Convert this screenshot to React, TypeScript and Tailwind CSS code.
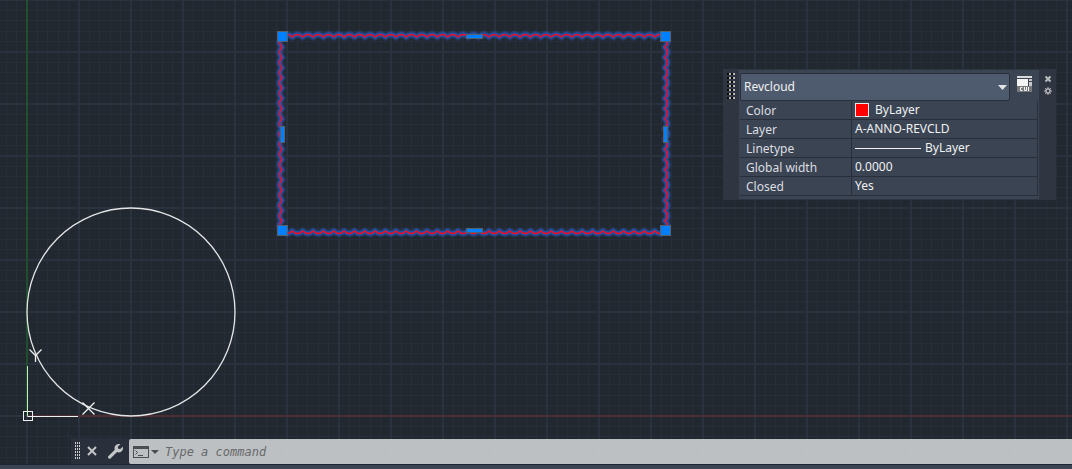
import React from 'react';

// Corners of the revision cloud and its scallop count per side
const cloud = { left: 282, top: 37, right: 665, bottom: 231, columns: 37, rows: 19 };

const cloudPath = () => {
  const { left, top, right, bottom, columns, rows } = cloud;
  const w = (right - left) / columns;
  const h = (bottom - top) / rows;
  const parts = [`M${left} ${top}`];
  for (let i = 0; i < columns; i++) parts.push(`q${w / 2} -5 ${w} 0`);
  for (let i = 0; i < rows; i++) parts.push(`q5 ${h / 2} 0 ${h}`);
  for (let i = 0; i < columns; i++) parts.push(`q${-w / 2} 5 ${-w} 0`);
  for (let i = 0; i < rows; i++) parts.push(`q-5 ${-h / 2} 0 ${-h}`);
  return parts.join(' ');
};

const grips = [
  { x: 277, y: 31, w: 10, h: 10 },
  { x: 660, y: 31, w: 10, h: 10 },
  { x: 277, y: 225, w: 10, h: 10 },
  { x: 660, y: 225, w: 10, h: 10 },
  { x: 466, y: 34, w: 16, h: 4 },
  { x: 466, y: 228, w: 16, h: 4 },
  { x: 280, y: 126, w: 4, h: 16 },
  { x: 663, y: 126, w: 4, h: 16 }
];

const properties = [
  { name: 'Color', value: 'ByLayer', kind: 'color' },
  { name: 'Layer', value: 'A-ANNO-REVCLD', kind: 'text' },
  { name: 'Linetype', value: 'ByLayer', kind: 'line' },
  { name: 'Global width', value: '0.0000', kind: 'input' },
  { name: 'Closed', value: 'Yes', kind: 'text' }
];

const Drawing = () => {
  const path = cloudPath();

  return (
    <svg className="absolute inset-0 w-full h-full" aria-label="Drawing area">
      <defs>
        <pattern id="grid" x="26" y="-1" width="52" height="52" patternUnits="userSpaceOnUse">
          <path
            d="M11.5 0V52M21.5 0V52M32.5 0V52M42.5 0V52M0 11.5H52M0 21.5H52M0 32.5H52M0 42.5H52"
            stroke="#272e39"
            fill="none"
          />
          <path d="M1 0V52M0 1H52" stroke="#2b323f" strokeWidth="2" fill="none" />
        </pattern>
      </defs>
      <rect width="100%" height="100%" fill="#212830" />
      <rect width="100%" height="100%" fill="url(#grid)" />

      {/* World axes */}
      <line x1="27" y1="0" x2="27" y2="416" stroke="#1d5a26" strokeWidth="1.5" />
      <line x1="27" y1="416" x2="100%" y2="416" stroke="#5c2a2f" strokeWidth="1.5" />

      <circle cx="131" cy="312" r="104" fill="none" stroke="#e4e5e6" strokeWidth="1.3" />

      {/* UCS icon */}
      <g fill="none" stroke="#f0f0f0">
        <path d="M27.5 366V416.5" stroke="#c4e8c4" />
        <path d="M27.5 416.5H78" />
        <rect x="23.5" y="411.5" width="9" height="9" />
        <g strokeWidth="1.3">
          <path d="M29.5 349.5L35.5 355.5L41.5 349.5M35.5 355.5V362" />
          <path d="M82.5 402.5L94.5 414.5M94.5 402.5L82.5 414.5" />
        </g>
      </g>

      <g fill="none" strokeLinejoin="round">
        <path d={path} stroke="#2458b8" strokeOpacity="0.35" strokeWidth="7" />
        <path d={path} stroke="#2458b8" strokeOpacity="0.75" strokeWidth="4.5" />
        <path d={path} stroke="#fa0a20" strokeWidth="1.4" />
      </g>
      {grips.map((grip) => (
        <rect
          key={`${grip.x}-${grip.y}`}
          x={grip.x + 0.5}
          y={grip.y + 0.5}
          width={grip.w}
          height={grip.h}
          fill="#007fff"
          stroke="#56616c"
        />
      ))}
    </svg>
  );
};

const Gripper = ({ rows, light }: { rows: number; light?: boolean }) => (
  <svg width={light ? 5 : 8} height={rows * (light ? 3 : 4)} aria-hidden="true">
    {Array.from({ length: rows }, (_, i) =>
      light ? (
        <path key={i} d={`M0 ${i * 3 + 1}h1m1 0h1m1 0h1`} stroke="#cfd0d2" strokeWidth="2" />
      ) : (
        <g key={i}>
          <path d={`M0 ${i * 4 + 1}h2m2 0h2`} stroke="#0a0a0a" strokeWidth="2" />
          <path d={`M2 ${i * 4 + 1}h2m2 0h2`} stroke="#b4b4b4" strokeWidth="2" />
        </g>
      )
    )}
  </svg>
);

const PropertyValue = ({ value, kind }: { value: string; kind: string }) => {
  if (kind === 'input') {
    return (
      <input
        id="global-width"
        defaultValue={value}
        className="block w-full h-4 bg-transparent p-0 leading-4 outline-none"
      />
    );
  }
  return (
    <div className="flex items-center h-4">
      {kind === 'color' && <span className="w-3.5 h-3.5 mr-1.5 bg-[#ff0000] border border-[#e8e8e8]" />}
      {kind === 'line' && <span className="w-[66px] h-px mr-1 bg-[#f2f2f2]" />}
      {value}
    </div>
  );
};

const QuickProperties = () => (
  <section
    aria-label="Quick properties"
    className="absolute top-[69px] right-4 w-[333px] flex bg-[#2f3541] text-[12px] text-[#f0f1f2]"
  >
    <div className="w-4 shrink-0 pt-1 pl-1">
      <Gripper rows={7} />
    </div>
    <div className="flex-1 bg-[#3b4453] mt-px mb-px pt-[3px] pb-[3px] px-px">
      <div className="flex items-start">
        <div className="relative w-[270px]">
          <select
            aria-label="Object type"
            className="block w-full h-7 appearance-none bg-[#4e5a6d] border border-[#292f3a] rounded-xs pl-[3px] outline-none"
          >
            <option>Revcloud</option>
          </select>
          <svg className="absolute right-[3px] top-3 pointer-events-none" width="9" height="5" aria-hidden="true">
            <path d="M0 0H9L4.5 5Z" fill="#e2e4e6" />
          </svg>
        </div>
        <button aria-label="Customize user interface" className="ml-[7px] mt-[3px]">
          <svg className="block" width="16" height="17" aria-hidden="true">
            <path d="M0 0H15V2H0Z" fill="#d8d8d8" />
            <path d="M0 3H11V10H0Z" fill="#f4f4f4" />
            <path d="M12 3H15V5H12ZM12 6H15V10H12Z" fill="#c8c8c8" />
            <path d="M0 10H15V16H0Z" fill="#77797c" />
            <path d="M5.5 11.5H3.5V14.5H5.5M7.5 11V14.5H9.5V11M11.5 11V15" fill="none" stroke="#f4f4f4" />
          </svg>
        </button>
      </div>
      <table className="w-full table-fixed border-separate border-spacing-0 border-r border-[#292f3a]">
        <tbody>
          {properties.map((property) => (
            <tr key={property.name}>
              <th
                scope="row"
                className="w-[112px] h-[19px] p-0 pt-px pl-1.5 text-left font-normal leading-4 text-[#dcdee1] border-b border-r border-[#292f3a]"
              >
                {property.kind === 'input' ? (
                  <label htmlFor="global-width" className="block">{property.name}</label>
                ) : (
                  property.name
                )}
              </th>
              <td className="h-[19px] p-0 pl-[3px] leading-4 border-b border-[#292f3a]">
                <PropertyValue value={property.value} kind={property.kind} />
              </td>
            </tr>
          ))}
        </tbody>
      </table>
    </div>
    <div className="w-[17px] shrink-0 flex flex-col items-center gap-1 pt-1.5">
      <button aria-label="Close">
        <svg className="block" width="8" height="8" aria-hidden="true">
          <path d="M1.5 1.5L6.5 6.5M6.5 1.5L1.5 6.5" stroke="#b9bbbe" strokeWidth="2" />
        </svg>
      </button>
      <button aria-label="Options">
        <svg className="block" width="8" height="8" aria-hidden="true">
          <circle cx="4" cy="4" r="2" fill="none" stroke="#b9bbbe" strokeWidth="1.4" />
          <path
            d="M4 0V2M4 6V8M0 4H2M6 4H8M1.2 1.2L2.6 2.6M5.4 5.4L6.8 6.8M6.8 1.2L5.4 2.6M2.6 5.4L1.2 6.8"
            stroke="#b9bbbe"
          />
        </svg>
      </button>
    </div>
  </section>
);

const CommandLine = () => (
  <div className="relative flex h-[26px] ml-[71px] pt-px">
    <div className="w-[58px] -mt-px flex items-center bg-[#292f3b] pl-1">
      <Gripper rows={6} light />
      <button aria-label="Close command line" className="ml-[7px]">
        <svg className="block" width="10" height="10" aria-hidden="true">
          <path d="M1 1L9 9M9 1L1 9" stroke="#c4c5c7" strokeWidth="2" />
        </svg>
      </button>
      <button aria-label="Customize" className="ml-[11px]">
        <svg className="block" width="15" height="15" viewBox="0 0 15 15" aria-hidden="true">
          <path
            d="M12.3 0.3A4.2 4.2 0 0 0 6.8 5.7L0.5 12A1.4 1.4 0 0 0 2.7 14.3L9.1 8A4.2 4.2 0 0 0 14.7 2.7L12.2 5.1L10.2 4.7L9.8 2.8Z"
            fill="#c4c5c7"
          />
        </svg>
      </button>
    </div>
    <div className="flex-1 flex items-center bg-[#c6c8ca]/95 rounded-l-xs pl-1">
      <button aria-label="Recent commands" className="flex items-center gap-0.5">
        <svg width="16" height="12" aria-hidden="true">
          <rect x="0.5" y="0.5" width="15" height="11" fill="none" stroke="#4c4e51" />
          <path d="M0 0H16V3H0Z" fill="#4c4e51" />
          <path d="M2.5 4.5L4.5 6.5L2.5 8.5M5 9.5H10" fill="none" stroke="#4c4e51" />
        </svg>
        <svg width="8" height="4" aria-hidden="true">
          <path d="M0 0H8L4 4Z" fill="#4c4e51" />
        </svg>
      </button>
      <input
        aria-label="Command"
        placeholder="Type a command"
        className="flex-1 ml-1.5 bg-transparent outline-none italic text-[12px] font-['DejaVu_Sans_Mono',monospace] placeholder:text-[#66686b]"
      />
    </div>
  </div>
);

const App = () => {
  return (
    <div className="min-h-screen flex flex-col bg-[#212830] font-['Noto_Sans',sans-serif]">
      <main className="relative flex-1 flex flex-col justify-end overflow-hidden">
        <Drawing />
        <QuickProperties />
        <CommandLine />
      </main>
      <footer className="h-[5px] bg-[#3b4453] border-t border-[#1f252e]" />
    </div>
  );
};

export default App;
